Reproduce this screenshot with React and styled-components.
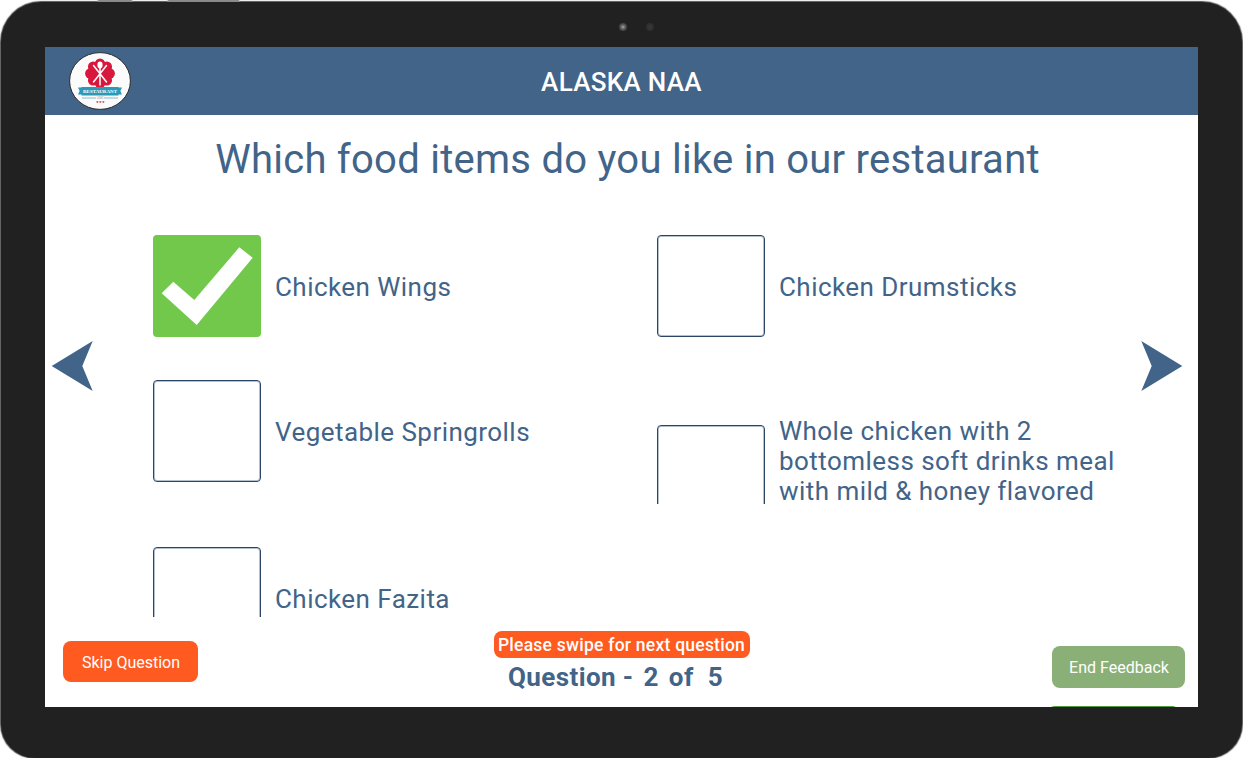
import React from 'react';
import styled, { createGlobalStyle } from 'styled-components';

const options = [
  { id: 'wings', label: 'Chicken Wings', checked: true },
  { id: 'drumsticks', label: 'Chicken Drumsticks' },
  { id: 'springrolls', label: 'Vegetable Springrolls' },
  { id: 'whole', label: 'Whole chicken with 2 bottomless soft drinks meal with mild & honey flavored', wrapped: true, clip: 79 },
  { id: 'fazita', label: 'Chicken Fazita', clip: 70 },
];

const petals = [0, 45, 90, 135, 180, 225, 270, 315];

const Logo = () => (
  <LogoBadge viewBox="0 0 62 58">
    <ellipse cx="31" cy="29" rx="30.4" ry="28.4" fill="#fbfbfb" stroke="#2b2b2b" strokeWidth="1" />
    <g fill="#d8173c">
      <circle cx="31" cy="21.5" r="11.5" />
      {petals.map((angle) => (
        <circle key={angle} cx="31" cy="11.8" r="5.2" transform={`rotate(${angle} 31 21.5)`} />
      ))}
    </g>
    <path d="M24.5 13.5L37.5 30M37.5 13.5L24.5 30M31 15v18" stroke="#fff" strokeWidth="1.5" strokeLinecap="round" />
    <ellipse cx="31" cy="13" rx="2.6" ry="3.4" fill="#fff" />
    <path d="M9 35.5h4v7H9l1.6-3.5zM53 35.5h-4v7h4l-1.6-3.5z" fill="#2b9ab8" />
    <rect x="12.5" y="35" width="37" height="8.5" fill="#2b9ab8" />
    <text x="31" y="41" textAnchor="middle" fontFamily="Liberation Serif, serif" fontSize="5" fontWeight="700" fill="#fff">
      RESTAURANT
    </text>
    <path d="M13 46h14M35 46h14" stroke="#2b9ab8" strokeWidth="0.6" />
    <text x="31" y="47" textAnchor="middle" fontFamily="Roboto, sans-serif" fontSize="2.6" fill="#7a9aa5">
      LOGO
    </text>
    <text x="31" y="50.6" textAnchor="middle" fontFamily="Roboto, sans-serif" fontSize="2.8" fontWeight="700" fill="#d8173c">
      ★★★
    </text>
  </LogoBadge>
);

const Check = () => (
  <svg width="108" height="102" viewBox="0 0 108 102">
    <path d="M8.7 58.3L20.3 46.7 41.3 65 86.3 12.3 99.7 22.7 43.7 90z" fill="#fff" />
  </svg>
);

const App = () => {
  return (
    <>
      <GlobalStyle />
      <Tablet>
        <TopButtons>
          <SideButton $width={36} />
          <SideButton $width={73} />
        </TopButtons>
        <CameraBar>
          <CameraDot $lit />
          <CameraDot />
        </CameraBar>
        <Screen>
          <Header>
            <Logo />
            <HeaderTitle>ALASKA NAA</HeaderTitle>
          </Header>
          <Body>
            <Arrow viewBox="0 0 42 50" $side="left">
              <path d="M0.7 25L41.7 0 31.3 25 41.7 50z" />
            </Arrow>
            <Main>
              <Question>Which food items do you like in our restaurant</Question>
              <OptionGrid>
                {options.map((option) => (
                  <Option key={option.id} $wrapped={option.wrapped}>
                    <BoxClip $clip={option.clip} $wrapped={option.wrapped}>
                      <CheckBox $checked={option.checked}>{option.checked && <Check />}</CheckBox>
                    </BoxClip>
                    <OptionLabel $wrapped={option.wrapped}>{option.label}</OptionLabel>
                  </Option>
                ))}
              </OptionGrid>
            </Main>
            <Arrow viewBox="0 0 42 50" $side="right">
              <path d="M41.3 25L0.3 0 10.7 25 0.3 50z" />
            </Arrow>
          </Body>
          <Footer>
            <SkipButton>Skip Question</SkipButton>
            <Progress>
              <SwipeHint>Please swipe for next question</SwipeHint>
              <QuestionCount>
                Question -<Count>2</Count>of<Count $wide>5</Count>
              </QuestionCount>
            </Progress>
            <FooterEnd>
              <EndButton>End Feedback</EndButton>
              <SubmitButton />
            </FooterEnd>
          </Footer>
        </Screen>
      </Tablet>
    </>
  );
};

export default App;

const GlobalStyle = createGlobalStyle`
  html, body {
    margin: 0;
    padding: 0;
    background: #fff;
    font-family: Roboto, "Liberation Sans", sans-serif;
  }
`;

const Tablet = styled.div`
  position: relative;
  box-sizing: border-box;
  width: 1241px;
  height: 756px;
  margin: 2px 1px 0;
  padding: 45px 44px 50px 44px;
  background: #212121;
  border-radius: 40px 40px 34px 34px;
  box-shadow: 0 0 1px 1px #555;
`;

const TopButtons = styled.div`
  position: absolute;
  top: -2px;
  left: 96px;
  display: flex;
  gap: 34px;
`;

const SideButton = styled.div`
  width: ${(p) => p.$width}px;
  height: 2px;
  background: #8a8a8a;
  border-radius: 2px 2px 0 0;
`;

const CameraBar = styled.div`
  position: absolute;
  top: 21px;
  left: 618px;
  display: flex;
  gap: 19px;
`;

const CameraDot = styled.div`
  width: 8px;
  height: 8px;
  border-radius: 50%;
  background: ${(p) => (p.$lit ? 'radial-gradient(circle, #a5a5a5 0%, #555 45%, #262626 100%)' : 'radial-gradient(circle, #3a3a3a 0%, #262626 100%)')};
`;

const Screen = styled.div`
  display: flex;
  flex-direction: column;
  width: 1153px;
  height: 660px;
  background: #fff;
  overflow: hidden;
`;

const Header = styled.header`
  position: relative;
  display: flex;
  align-items: center;
  justify-content: center;
  height: 68px;
  flex-shrink: 0;
  background: #426488;
`;

const LogoBadge = styled.svg`
  position: absolute;
  left: 24px;
  top: 5px;
  width: 62px;
  height: 58px;
`;

const HeaderTitle = styled.h1`
  margin: 1px 0 0;
  font-size: 26px;
  font-weight: 500;
  letter-spacing: 0.3px;
  color: #fff;
`;

const Body = styled.div`
  display: flex;
  align-items: center;
  flex: 1;
  min-height: 0;
`;

const Arrow = styled.svg`
  flex-shrink: 0;
  width: 42px;
  height: 50px;
  fill: #426488;
  margin: ${(p) => (p.$side === 'left' ? '0 0 0 6px' : '0 15px 0 0')};
`;

const Main = styled.main`
  flex: 1;
  align-self: stretch;
  min-width: 0;
`;

const Question = styled.h2`
  margin: 22px 0 52px;
  padding-left: 21px;
  font-size: 40px;
  line-height: 46px;
  font-weight: 400;
  letter-spacing: 0.26px;
  text-align: center;
  color: #426488;
`;

const OptionGrid = styled.div`
  display: grid;
  grid-template-columns: 504px 1fr;
  grid-template-rows: 102px 124px 70px;
  row-gap: 43px;
  padding-left: 60px;
`;

const Option = styled.div`
  display: flex;
  align-items: ${(p) => (p.$wrapped ? 'flex-start' : 'center')};
  gap: 14px;
  height: ${(p) => (p.$wrapped ? 'auto' : '102px')};
  padding-top: ${(p) => (p.$wrapped ? '36px' : '0')};
`;

const BoxClip = styled.div`
  flex-shrink: 0;
  align-self: flex-start;
  width: 108px;
  height: ${(p) => p.$clip || 102}px;
  margin-top: ${(p) => (p.$wrapped ? '9px' : '0')};
  overflow: hidden;
`;

const CheckBox = styled.div`
  box-sizing: border-box;
  width: 108px;
  height: 102px;
  border-radius: 4px;
  border: ${(p) => (p.$checked ? 'none' : '1px solid #2c4566')};
  box-shadow: ${(p) => (p.$checked ? 'none' : 'inset 0 0 0 1px rgba(66, 100, 136, 0.4)')};
  background: ${(p) => (p.$checked ? '#72c84b' : '#fff')};
  svg {
    display: block;
  }
`;

const OptionLabel = styled.div`
  width: 345px;
  padding-top: ${(p) => (p.$wrapped ? '0' : '1px')};
  font-size: 26px;
  line-height: 30px;
  letter-spacing: 0.45px;
  color: #426488;
`;

const Footer = styled.footer`
  display: grid;
  grid-template-columns: 1fr auto 1fr;
  height: 90px;
  flex-shrink: 0;
`;

const SkipButton = styled.button`
  justify-self: start;
  width: 135px;
  height: 41px;
  margin: 24px 0 0 18px;
  padding: 1px 0 0 1px;
  border: none;
  border-radius: 8px;
  background: #ff5a1f;
  color: #fff;
  font-family: Roboto, sans-serif;
  font-size: 16px;
`;

const Progress = styled.div`
  display: flex;
  flex-direction: column;
  align-items: center;
  padding-top: 14px;
`;

const SwipeHint = styled.div`
  box-sizing: border-box;
  width: 256px;
  height: 27px;
  padding-top: 1px;
  border-radius: 8px;
  background: #ff5a1f;
  color: #fff;
  font-size: 17.5px;
  font-weight: 500;
  letter-spacing: 0.24px;
  line-height: 27px;
  text-align: center;
  white-space: nowrap;
`;

const QuestionCount = styled.div`
  margin: 3px 12px 0 0;
  font-size: 26px;
  line-height: 32px;
  font-weight: 700;
  letter-spacing: 0.4px;
  color: #426488;
  white-space: nowrap;
`;

const Count = styled.span`
  margin: ${(p) => (p.$wide ? '0 0 0 14px' : '0 10px')};
`;

const FooterEnd = styled.div`
  display: flex;
  flex-direction: column;
  align-items: flex-end;
  padding: 29px 13px 0 0;
`;

const EndButton = styled.button`
  flex-shrink: 0;
  width: 133px;
  height: 42px;
  padding: 0 0 0 1px;
  border: none;
  border-radius: 8px;
  background: #8ab077;
  color: #fff;
  font-family: Roboto, sans-serif;
  font-size: 16px;
`;

const SubmitButton = styled.div`
  flex-shrink: 0;
  width: 133px;
  height: 42px;
  margin: 18px 5px 0 0;
  border-radius: 8px;
  background: #4f9a3c;
`;
